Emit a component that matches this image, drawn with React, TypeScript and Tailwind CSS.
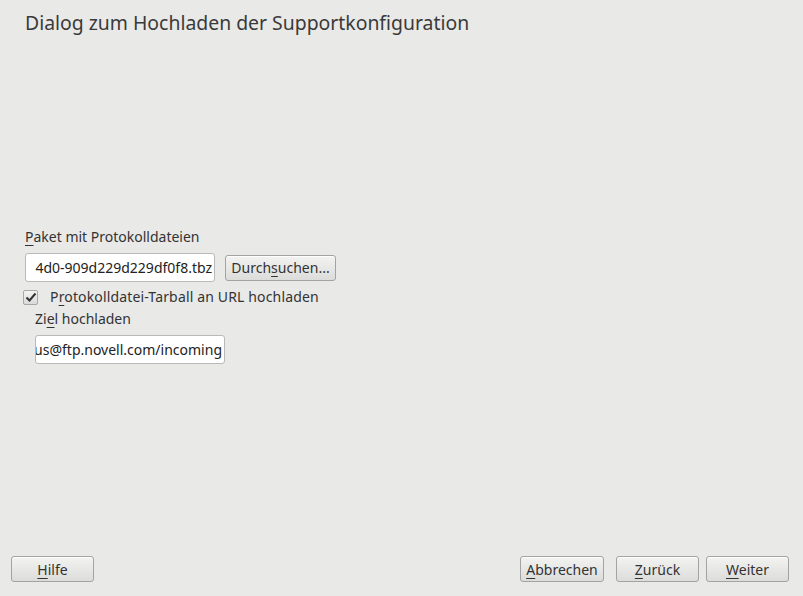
import React, { useState } from "react";

const U: React.FC<{ children: React.ReactNode }> = ({ children }) => (
  <span className="underline decoration-1 underline-offset-[3px]">{children}</span>
);

const Btn: React.FC<{ className?: string; children: React.ReactNode }> = ({ className, children }) => (
  <button
    className={
      "h-[26px] rounded-[3px] border border-[#a3a3a3] bg-gradient-to-b from-[#f3f3f2] to-[#dcdcdb] text-[14px] text-[#333] shadow-[inset_0_1px_0_#fff] " +
      (className ?? "")
    }
  >
    {children}
  </button>
);

const ClipInput: React.FC<{ value: string; className?: string }> = ({ value, className }) => (
  <div
    className={
      "flex h-[29px] items-center justify-end overflow-hidden rounded-[3px] border border-[#b9b9b9] bg-white pr-[2px] text-[14px] text-[#222] " +
      (className ?? "")
    }
  >
    <span className="whitespace-nowrap">{value}</span>
  </div>
);

export default function App() {
  const [checked, setChecked] = useState(true);

  return (
    <div
      className="flex h-[596px] w-[803px] flex-col bg-[#e9e9e8] text-[#333]"
      style={{ fontFamily: '"Noto Sans", "Open Sans", sans-serif' }}
    >
      <h1 className="ml-[25px] mt-[9px] text-[19.4px] leading-[28px] text-[#3a3a3a]">
        Dialog zum Hochladen der Supportkonfiguration
      </h1>

      <div className="ml-[25px] mt-[190px] flex flex-col">
        <label className="text-[14px] leading-[20px]">
          <U>P</U>aket mit Protokolldateien
        </label>
        <div className="mt-[6px] flex items-center gap-[10px]">
          <ClipInput value="4d0-909d229d229df0f8.tbz" className="w-[190px]" />
          <Btn className="w-[111px]">
            Durch<U>s</U>uchen...
          </Btn>
        </div>

        <label className="mt-[5px] flex h-[20px] cursor-pointer items-center" onClick={() => setChecked(!checked)}>
          <span className="ml-[-2px] flex h-[15px] w-[15px] items-center justify-center rounded-[2px] border border-[#a8a8a8] bg-gradient-to-b from-[#f4f4f4] to-[#dadada]">
            {checked && (
              <svg width="12" height="11" viewBox="0 0 12 11">
                <path d="M1.5 5.5 L4.5 8.5 L10.5 1.5" fill="none" stroke="#333" strokeWidth="2" />
              </svg>
            )}
          </span>
          <span className="ml-[12px] text-[14px] leading-[20px] tracking-[0.15px]">
            P<U>r</U>otokolldatei-Tarball an URL hochladen
          </span>
        </label>

        <div className="ml-[10px] flex flex-col">
          <label className="mt-[2px] text-[14px] leading-[20px]">
            Zi<U>e</U>l hochladen
          </label>
          <ClipInput value="us@ftp.novell.com/incoming" className="mt-[6px] w-[190px]" />
        </div>
      </div>

      <div className="mt-auto mb-[14px] flex items-center px-[11px]">
        <Btn className="w-[83px]">
          <U>H</U>ilfe
        </Btn>
        <div className="ml-auto flex">
          <Btn className="mr-[12px] w-[84px]">
            <U>A</U>bbrechen
          </Btn>
          <Btn className="mr-[7px] w-[83px]">
            <U>Z</U>urück
          </Btn>
          <Btn className="mr-[3px] w-[83px]">
            <U>W</U>eiter
          </Btn>
        </div>
      </div>
    </div>
  );
}
